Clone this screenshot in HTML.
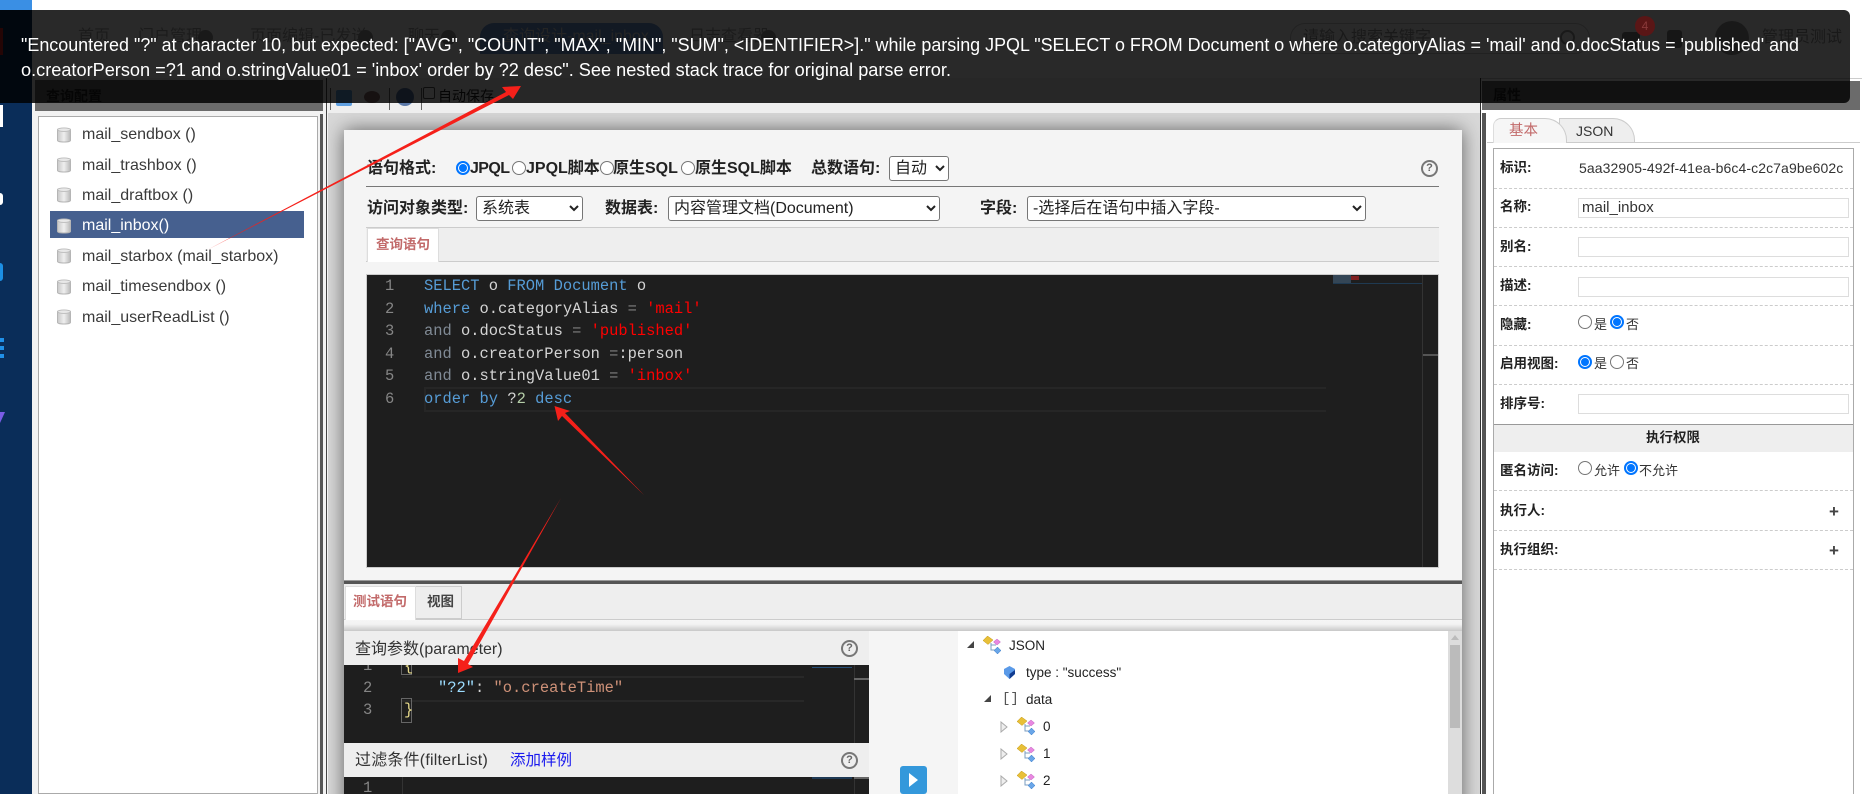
<!DOCTYPE html>
<html><head><meta charset="utf-8"><title>查询设计</title>
<style>
html,body{margin:0;padding:0;width:1862px;height:794px;overflow:hidden;background:#fff}
body{position:relative;font-family:"Liberation Sans","Noto Sans CJK SC",sans-serif;font-size:13.5px;color:#333}
.a,.t{position:absolute;box-sizing:border-box}
.t{white-space:nowrap}
.b{font-weight:bold;color:#222}
.li{position:absolute;left:82px;height:24px;line-height:24px;font-size:16px;color:#3a3a3a;white-space:nowrap}
.db{position:absolute;left:57px;width:14px;height:16px}
.code{position:absolute;left:424px;height:22px;line-height:22px;font:15.43px/22px "Liberation Mono",monospace;color:#d4d4d4;white-space:pre}
.ln{position:absolute;height:22px;font:15.43px/22px "Liberation Mono",monospace;color:#858585;white-space:pre}
.k{color:#569cd6}.g{color:#808a95}.s{color:#f00}.e{color:#808080}.n{color:#b5cea8}
.r{position:absolute;width:14px;height:14px;border-radius:50%;border:1px solid #767676;background:#fff;box-sizing:border-box}
.r.c{border:2px solid #0075ff}
.r.c:after{content:"";position:absolute;left:1px;top:1px;width:8px;height:8px;border-radius:50%;background:#0075ff}
select{position:absolute;box-sizing:border-box;background:#fff;border:1px solid #767676;border-radius:3px;font:16px "Liberation Sans","Noto Sans CJK SC",sans-serif;color:#222;padding:0 0 0 1px;margin:0}
.i{position:absolute;left:1578px;width:271px;height:20px;border:1px solid #ddd;background:#fff;box-sizing:border-box;font-size:15px;line-height:18px;padding-left:3px;color:#333}
.d{position:absolute;left:1494px;width:359px;height:0;border-top:1px dashed #ccc}
.h{position:absolute;width:17px;height:17px;border:2px solid #777;border-radius:50%;box-sizing:border-box;font:bold 11px/13px "Liberation Sans",sans-serif;color:#666;text-align:center;background:#f4f4f4}
.p{position:absolute;font:bold 17px/17px "Liberation Sans",sans-serif;color:#444}
.tr{position:absolute;font-size:13.5px;height:20px;line-height:20px;color:#222;white-space:nowrap}
.ic{position:absolute;width:20px;height:20px}
.gh{position:absolute;white-space:nowrap;top:27px;line-height:20px;font-size:16px;color:#aaa}
.gc{position:absolute;top:30px;width:15px;height:15px;border-radius:50%;background:#999}
</style></head><body>
<svg width="0" height="0" style="position:absolute">
<defs>
<linearGradient id="dg" x1="0" x2="1" y1="0" y2="0"><stop offset="0" stop-color="#c8c8c8"/><stop offset=".5" stop-color="#efefef"/><stop offset="1" stop-color="#b8b8b8"/></linearGradient>
<symbol id="db" viewBox="0 0 14 18" preserveAspectRatio="none"><path d="M.5 3C.5 1 13.500 1 13.500 3V15C13.500 17.500 .5 17.500 .5 15Z" fill="url(#dg)" stroke="#b5b5b5"/><ellipse cx="7" cy="3" rx="6.500" ry="2" fill="#e8e8e8" stroke="#bbb"/></symbol>
<symbol id="tree" viewBox="0 0 20 20"><path d="M8 7V14H13M8 9H13" fill="none" stroke="#7a9cc0"/><path d="M0 4.500 4.500 0 10 4 5 8.500Z" fill="#e8c038" stroke="#c49a20" stroke-width=".5"/><path d="M10.500 6 14 3 17.500 6 14 9Z" fill="#e888e0" stroke="#c060c0" stroke-width=".5"/><path d="M11 14.500 14.500 11 18 14.500 14.500 18Z" fill="#6aa6e8" stroke="#4080c8" stroke-width=".5"/></symbol>
</defs></svg>

<!-- left nav -->
<div class="a" style="left:0;top:0;width:32px;height:10px;background:#3a8fe4"></div>
<div class="a" style="left:0;top:10px;width:32px;height:784px;background:#0a2d59"></div>
<div class="a" style="left:0;top:28px;width:3px;height:27px;background:#e02020"></div>
<div class="a" style="left:0;top:105px;width:3px;height:22px;background:#fff"></div>
<div class="a" style="left:0;top:193px;width:3px;height:12px;background:#fff;border-radius:0 3px 3px 0"></div>
<div class="a" style="left:0;top:263px;width:3px;height:18px;background:#1c8fe4;border-radius:0 4px 4px 0"></div>
<div class="a" style="left:0;top:338px;width:4px;height:4px;background:#2090e8"></div>
<div class="a" style="left:0;top:346px;width:4px;height:4px;background:#2090e8"></div>
<div class="a" style="left:0;top:354px;width:4px;height:4px;background:#2090e8"></div>
<svg class="a" style="left:0;top:412px" width="5" height="12"><path d="M0 0H5L0 11Z" fill="#7a5ce6"/></svg>

<!-- header under toast -->
<div class="gh" style="left:78px">首页</div>
<div class="gh" style="left:138px">门户管理</div>
<div class="gc" style="left:198px"></div>
<div class="gh" style="left:250px">页面编辑-已发送</div>
<div class="gc" style="left:358px"></div>
<div class="gh" style="left:408px">聊天</div>
<div class="gc" style="left:441px"></div>
<div class="a" style="left:480px;top:23px;width:183px;height:31px;border-radius:14px 14px 0 0;background:#6f9ad8"></div>
<div class="gh" style="left:503px;color:#ddd">查询设计-mail_inbox</div>
<div class="gh" style="left:689px">日志查看器</div>
<div class="gc" style="left:761px"></div>
<div class="a" style="left:1290px;top:23px;width:300px;height:31px;border:1px solid #ccc;border-radius:15px"></div>
<div class="gh" style="left:1303px;top:28px;color:#999">请输入搜索关键字</div>
<div class="a" style="left:1560px;top:30px;width:15px;height:15px;border:2px solid #999;border-radius:50%"></div>
<div class="a" style="left:1622px;top:32px;width:18px;height:16px;background:#888;border-radius:3px"></div>
<div class="a" style="left:1667px;top:30px;width:15px;height:18px;background:#888;border-radius:3px"></div>
<div class="a" style="left:1715px;top:21px;width:34px;height:34px;border-radius:50%;background:#999"></div>
<div class="gh" style="left:1762px;top:28px;color:#999">管理员测试</div>

<!-- left panel -->
<div class="a" style="left:32px;top:78px;width:296px;height:716px;background:#f2f2f2"></div>
<div class="a" style="left:35px;top:80px;width:288px;height:31px;background:#6b6b6b"></div>
<div class="t b" style="left:46px;top:86px;line-height:20px;font-size:14px;color:#222">查询配置</div>
<div class="a" style="left:38px;top:116px;width:280px;height:678px;background:#fff;border:1px solid #aaa"></div>
<div class="a" style="left:320px;top:114px;width:3px;height:680px;background:#555"></div>
<div class="a" style="left:326px;top:78px;width:1px;height:716px;background:#444"></div>
<div class="a" style="left:50px;top:211px;width:254px;height:27px;background:#46608f"></div>
<svg class="db" style="top:127px"><use href="#db"/></svg>
<svg class="db" style="top:157px"><use href="#db"/></svg>
<svg class="db" style="top:187px"><use href="#db"/></svg>
<svg class="db" style="top:218px"><use href="#db"/></svg>
<svg class="db" style="top:248px"><use href="#db"/></svg>
<svg class="db" style="top:279px"><use href="#db"/></svg>
<svg class="db" style="top:309px"><use href="#db"/></svg>
<div class="li" style="top:123px">mail_sendbox ()</div>
<div class="li" style="top:154px">mail_trashbox ()</div>
<div class="li" style="top:184px">mail_draftbox ()</div>
<div class="li" style="top:214px;color:#fff">mail_inbox()</div>
<div class="li" style="top:245px">mail_starbox (mail_starbox)</div>
<div class="li" style="top:275px">mail_timesendbox ()</div>
<div class="li" style="top:306px">mail_userReadList ()</div>

<!-- toolbar -->
<div class="a" style="left:328px;top:78px;width:1152px;height:36px;background:#eee"></div>
<div class="a" style="left:330px;top:88px;width:1px;height:22px;background:#666"></div>
<div class="a" style="left:389px;top:88px;width:1px;height:22px;background:#666"></div>
<div class="a" style="left:421px;top:88px;width:1px;height:22px;background:#666"></div>
<div class="a" style="left:336px;top:90px;width:16px;height:16px;background:#5f9fe0;border-radius:2px"></div>
<div class="a" style="left:364px;top:91px;width:16px;height:12px;background:#8a6a6a;border-radius:50%"></div>
<div class="a" style="left:396px;top:88px;width:18px;height:18px;background:#5a78a8;border-radius:50%"></div>
<div class="a" style="left:423px;top:87px;width:12px;height:12px;border:1px solid #555;border-radius:2px;background:#fff"></div>
<div class="t" style="left:438px;top:86px;line-height:20px;font-size:14px;color:#222">自动保存</div>

<!-- center clip + card -->
<div class="a" style="left:328px;top:113px;width:1152px;height:681px;overflow:hidden;background:#d8d8d8">
  <div class="a" style="left:16px;top:17px;width:1118px;height:700px;background:#f4f4f4;box-shadow:0 0 18px rgba(0,0,0,.55)"></div>
</div>
<div class="a" style="left:1480px;top:78px;width:1px;height:716px;background:#333"></div>

<div class="t b" style="left:367px;top:158px;line-height:22px;font-size:16px">语句格式:</div>
<div class="r c" style="left:456px;top:161px"></div>
<div class="t" style="left:470px;top:158px;line-height:22px;font-size:16px;letter-spacing:-.6px;font-weight:bold;color:#222">JPQL</div>
<div class="r" style="left:512px;top:161px"></div>
<div class="t" style="left:526px;top:158px;line-height:22px;font-size:16px;font-weight:bold;color:#222">JPQL脚本</div>
<div class="r" style="left:600px;top:161px"></div>
<div class="t" style="left:613px;top:158px;line-height:22px;font-size:16px;font-weight:bold;color:#222">原生SQL</div>
<div class="r" style="left:681px;top:161px"></div>
<div class="t" style="left:695px;top:158px;line-height:22px;font-size:16px;font-weight:bold;color:#222">原生SQL脚本</div>
<div class="t b" style="left:811px;top:158px;line-height:22px;font-size:16px">总数语句:</div>
<select style="left:889px;top:156px;width:60px;height:25px"><option>自动</option></select>
<div class="h" style="left:1421px;top:160px">?</div>
<div class="a" style="left:366px;top:186px;width:1073px;height:1px;background:#777"></div>

<div class="t b" style="left:367px;top:198px;line-height:22px;font-size:16px">访问对象类型:</div>
<select style="left:476px;top:196px;width:107px;height:25px"><option>系统表</option></select>
<div class="t b" style="left:605px;top:198px;line-height:22px;font-size:16px">数据表:</div>
<select style="left:668px;top:196px;width:272px;height:25px"><option>内容管理文档(Document)</option></select>
<div class="t b" style="left:980px;top:198px;line-height:22px;font-size:16px">字段:</div>
<select style="left:1027px;top:196px;width:339px;height:25px"><option>-选择后在语句中插入字段-</option></select>
<div class="a" style="left:366px;top:227px;width:1073px;height:35px;background:#eee;border-top:1px solid #ccc;border-bottom:1px solid #ccc"></div>
<div class="a" style="left:367px;top:228px;width:72px;height:34px;background:#fff;border:1px solid #ddd;border-bottom:0"></div>
<div class="t" style="left:376px;top:235px;line-height:20px;font-size:13.500px;font-weight:bold;color:#c26a6a">查询语句</div>

<!-- main editor -->
<div class="a" style="left:366px;top:274px;width:1073px;height:294px;background:#1e1e1e;border:1px solid #ccc"></div>
<div class="a" style="left:424px;top:387px;width:902px;height:25px;border:2px solid #262626;border-right:0"></div>
<div class="a" style="left:1422px;top:275px;width:1px;height:292px;background:#333"></div>
<div class="a" style="left:1333px;top:283px;width:89px;height:1px;background:#1f3a52"></div>
<div class="a" style="left:1333px;top:275px;width:18px;height:8px;background:#344656"></div>
<div class="a" style="left:1351px;top:276px;width:8px;height:4px;background:#802020"></div>
<div class="a" style="left:1423px;top:354px;width:15px;height:2px;background:#555"></div>
<div class="ln" style="left:385px;top:275px">1</div><div class="ln" style="left:385px;top:298px">2</div><div class="ln" style="left:385px;top:320px">3</div><div class="ln" style="left:385px;top:343px">4</div><div class="ln" style="left:385px;top:365px">5</div><div class="ln" style="left:385px;top:388px">6</div>
<div class="code" style="top:275px"><span class="k">SELECT</span> o <span class="k">FROM</span> <span class="k">Document</span> o</div>
<div class="code" style="top:298px"><span class="k">where</span> o.categoryAlias <span class="e">=</span> <span class="s">'mail'</span></div>
<div class="code" style="top:320px"><span class="g">and</span> o.docStatus <span class="e">=</span> <span class="s">'published'</span></div>
<div class="code" style="top:343px"><span class="g">and</span> o.creatorPerson <span class="e">=</span>:person</div>
<div class="code" style="top:365px"><span class="g">and</span> o.stringValue01 <span class="e">=</span> <span class="s">'inbox'</span></div>
<div class="code" style="top:388px"><span class="k">order</span> <span class="k">by</span> ?<span class="n">2</span> <span class="k">desc</span></div>

<!-- divider & lower tabs -->
<div class="a" style="left:344px;top:580px;width:1118px;height:4px;background:#555;border-top:1px solid #999"></div>
<div class="a" style="left:344px;top:584px;width:1118px;height:36px;background:#eee;border-bottom:1px solid #ccc"></div>
<div class="a" style="left:345px;top:586px;width:71px;height:34px;background:#fff;border:1px solid #ddd;border-bottom:0"></div>
<div class="a" style="left:416px;top:586px;width:46px;height:33px;background:#eee;border:1px solid #ccc;border-left:0"></div>
<div class="t" style="left:353px;top:592px;line-height:20px;font-size:13.500px;font-weight:bold;color:#c26a6a">测试语句</div>
<div class="t" style="left:427px;top:592px;line-height:20px;font-size:13.500px;font-weight:bold;color:#444">视图</div>
<div class="a" style="left:344px;top:620px;width:1118px;height:11px;background:linear-gradient(#f6f6f6,#f2f2f2 40%,#c8c8c8)"></div>

<!-- params panel -->
<div class="a" style="left:344px;top:631px;width:525px;height:34px;background:#eee"></div>
<div class="t" style="left:355px;top:640px;line-height:20px;font-size:16px;color:#333">查询参数(parameter)</div>
<div class="h" style="left:841px;top:640px;background:#eee">?</div>
<div class="a" style="left:344px;top:665px;width:525px;height:78px;background:#1e1e1e"></div>
<div class="a" style="left:402px;top:676px;width:402px;height:26px;border-top:2px solid #282828;border-bottom:2px solid #282828"></div>
<div class="a" style="left:401px;top:665px;width:11px;height:10px;border:1px solid #666;border-top:0"></div>
<div class="a" style="left:401px;top:698px;width:11px;height:25px;border:1px solid #666"></div>
<div class="a" style="left:854px;top:665px;width:1px;height:78px;background:#333"></div>
<div class="a" style="left:854px;top:678px;width:15px;height:2px;background:#666"></div>
<div class="a" style="left:812px;top:667px;width:40px;height:1px;background:#264f78"></div>
<div style="position:absolute;left:344px;top:665px;width:525px;height:78px;overflow:hidden">
<div class="ln" style="left:19px;top:-10px">1</div><div class="ln" style="left:19px;top:12px">2</div><div class="ln" style="left:19px;top:34px">3</div>
<div class="code" style="left:60px;top:-10px;color:#e6d98a">{</div>
<div class="code" style="left:94px;top:12px"><span style="color:#9cdcfe">"?2"</span>: <span style="color:#ce9178">"o.createTime"</span></div>
<div class="code" style="left:60px;top:34px;color:#e6d98a">}</div>
</div>

<!-- filter panel -->
<div class="a" style="left:344px;top:743px;width:525px;height:34px;background:#eee"></div>
<div class="t" style="left:355px;top:751px;line-height:20px;font-size:16px;letter-spacing:.2px;color:#333">过滤条件(filterList)</div>
<div class="t" style="left:510px;top:751px;line-height:20px;font-size:15.500px;color:#1a1aee">添加样例</div>
<div class="h" style="left:841px;top:752px;background:#eee">?</div>
<div class="a" style="left:344px;top:777px;width:525px;height:17px;background:#1e1e1e"></div>
<div class="a" style="left:402px;top:777px;width:1px;height:17px;background:#333"></div>
<div class="a" style="left:854px;top:777px;width:1px;height:17px;background:#333"></div>
<div class="a" style="left:854px;top:777px;width:15px;height:2px;background:#666"></div>
<div class="a" style="left:812px;top:777px;width:40px;height:2px;background:#1f3a55"></div>
<div class="ln" style="left:363px;top:777px">1</div>

<!-- run btn -->
<div class="a" style="left:869px;top:631px;width:89px;height:163px;background:#f5f5f5"></div>
<div class="a" style="left:900px;top:766px;width:27px;height:28px;background:#3498db;border-radius:3px"></div>
<svg class="a" style="left:908px;top:772px" width="12" height="16"><path d="M1 1 10 8 1 15Z" fill="#fff"/></svg>

<!-- tree -->
<div class="a" style="left:958px;top:631px;width:490px;height:163px;background:#fff"></div>
<div class="a" style="left:1448px;top:631px;width:14px;height:163px;background:#ddd"></div>
<div class="a" style="left:1450px;top:645px;width:10px;height:83px;background:#bbb"></div>
<svg class="a" style="left:1450px;top:635px" width="10" height="6"><path d="M5 0 9 5H1Z" fill="#bbb"/></svg>
<svg class="a" style="left:966px;top:640px" width="10" height="10"><path d="M8 1V8H1Z" fill="#444"/></svg>
<svg class="ic" style="left:983px;top:636px"><use href="#tree"/></svg>
<div class="tr" style="left:1009px;top:636px">JSON</div>
<svg class="a" style="left:1003px;top:666px" width="13" height="14"><path d="M6.500 0 12 3V8L6.500 13 1 8V3Z" fill="#5a9ae8"/><path d="M12 4V8L6.500 13V8Z" fill="#123c90"/></svg>
<div class="tr" style="left:1026px;top:663px">type : "success"</div>
<svg class="a" style="left:983px;top:694px" width="10" height="10"><path d="M8 1V8H1Z" fill="#444"/></svg>
<div class="tr" style="left:1002px;top:689px;font:14px/20px 'Liberation Mono',monospace;color:#555">[]</div>
<div class="tr" style="left:1026px;top:690px">data</div>
<svg class="a" style="left:1000px;top:721px" width="9" height="12"><path d="M1 1 7 6 1 11Z" fill="#eee" stroke="#aaa"/></svg>
<svg class="ic" style="left:1017px;top:717px"><use href="#tree"/></svg>
<div class="tr" style="left:1043px;top:717px">0</div>
<svg class="a" style="left:1000px;top:748px" width="9" height="12"><path d="M1 1 7 6 1 11Z" fill="#eee" stroke="#aaa"/></svg>
<svg class="ic" style="left:1017px;top:744px"><use href="#tree"/></svg>
<div class="tr" style="left:1043px;top:744px">1</div>
<svg class="a" style="left:1000px;top:775px" width="9" height="12"><path d="M1 1 7 6 1 11Z" fill="#eee" stroke="#aaa"/></svg>
<svg class="ic" style="left:1017px;top:771px"><use href="#tree"/></svg>
<div class="tr" style="left:1043px;top:771px">2</div>

<!-- right panel -->
<div class="a" style="left:1481px;top:78px;width:381px;height:716px;background:#fff"></div>
<div class="a" style="left:1481px;top:78px;width:381px;height:1px;background:#ccc"></div>
<div class="a" style="left:1482px;top:81px;width:378px;height:29px;background:#6b6b6b"></div>
<div class="t b" style="left:1493px;top:85px;line-height:20px;font-size:14px;color:#222">属性</div>
<div class="a" style="left:1482px;top:113px;width:4px;height:681px;background:#555"></div>
<div class="a" style="left:1559px;top:118px;width:76px;height:24px;background:#eee;border:1px solid #ccc;border-bottom:0;border-radius:0 22px 0 0"></div>
<div class="a" style="left:1487px;top:142px;width:373px;height:1px;background:#ccc"></div>
<div class="a" style="left:1493px;top:118px;width:74px;height:25px;background:#f6f6f6;border-top:1px solid #ccc;border-left:1px solid #ddd;border-right:1px solid #ccc;border-radius:8px 22px 0 0"></div>
<div class="t" style="left:1509px;top:121px;line-height:20px;font-size:14.5px;color:#c26a6a">基本</div>
<div class="t" style="left:1576px;top:121px;line-height:20px;font-size:14px;color:#333">JSON</div>
<div class="a" style="left:1493px;top:148px;width:361px;height:646px;border:1px solid #aaa;border-bottom:0"></div>

<div class="t b" style="left:1500px;top:158px;line-height:20px">标识:</div>
<div class="t" style="left:1579px;top:158px;line-height:20px;font-size:14px;letter-spacing:.1px;color:#333">5aa32905-492f-41ea-b6c4-c2c7a9be602c</div>
<div class="d" style="top:188px"></div>
<div class="t b" style="left:1500px;top:197px;line-height:20px">名称:</div>
<div class="i" style="top:198px">mail_inbox</div>
<div class="d" style="top:227px"></div>
<div class="t b" style="left:1500px;top:237px;line-height:20px">别名:</div>
<div class="i" style="top:237px"></div>
<div class="d" style="top:266px"></div>
<div class="t b" style="left:1500px;top:276px;line-height:20px">描述:</div>
<div class="i" style="top:277px"></div>
<div class="d" style="top:305px"></div>
<div class="t b" style="left:1500px;top:315px;line-height:20px">隐藏:</div>
<div class="r" style="left:1578px;top:315px"></div><div class="t" style="left:1594px;top:315px;line-height:20px;font-size:13px">是</div>
<div class="r c" style="left:1610px;top:315px"></div><div class="t" style="left:1626px;top:315px;line-height:20px;font-size:13px">否</div>
<div class="d" style="top:345px"></div>
<div class="t b" style="left:1500px;top:354px;line-height:20px">启用视图:</div>
<div class="r c" style="left:1578px;top:355px"></div><div class="t" style="left:1594px;top:354px;line-height:20px;font-size:13px">是</div>
<div class="r" style="left:1610px;top:355px"></div><div class="t" style="left:1626px;top:354px;line-height:20px;font-size:13px">否</div>
<div class="d" style="top:384px"></div>
<div class="t b" style="left:1500px;top:394px;line-height:20px">排序号:</div>
<div class="i" style="top:394px"></div>
<div class="a" style="left:1494px;top:424px;width:359px;height:28px;background:#eee;border-top:1px solid #999"></div>
<div class="t b" style="left:1646px;top:428px;line-height:20px">执行权限</div>
<div class="t b" style="left:1500px;top:461px;line-height:20px">匿名访问:</div>
<div class="r" style="left:1578px;top:461px"></div><div class="t" style="left:1594px;top:461px;line-height:20px;font-size:13px">允许</div>
<div class="r c" style="left:1624px;top:461px"></div><div class="t" style="left:1639px;top:461px;line-height:20px;font-size:13px">不允许</div>
<div class="d" style="top:490px"></div>
<div class="t b" style="left:1500px;top:501px;line-height:20px">执行人:</div>
<div class="p" style="left:1829px;top:503px">+</div>
<div class="d" style="top:530px"></div>
<div class="t b" style="left:1500px;top:540px;line-height:20px">执行组织:</div>
<div class="p" style="left:1829px;top:542px">+</div>
<div class="d" style="top:569px"></div>

<!-- toast -->
<div class="a" style="left:-10px;top:10px;width:1860px;height:93px;background:rgba(0,0,0,.84);border-radius:6px"></div>
<div class="a" style="left:1635px;top:16px;width:20px;height:20px;border-radius:50%;background:#5a1616;color:#8a3a3a;text-align:center;line-height:20px;font-size:12px">4</div>
<svg class="a" style="left:0;top:0" width="1862" height="110" font-family="Liberation Sans, sans-serif" font-size="18" fill="#fff">
<text x="21" y="51" textLength="1778" lengthAdjust="spacingAndGlyphs">"Encountered "?" at character 10, but expected: ["AVG", "COUNT", "MAX", "MIN", "SUM", &lt;IDENTIFIER&gt;]." while parsing JPQL "SELECT o FROM Document o where o.categoryAlias = 'mail' and o.docStatus = 'published' and</text>
<text x="21" y="76" textLength="930" lengthAdjust="spacingAndGlyphs">o.creatorPerson =?1 and o.stringValue01 = 'inbox' order by ?2 desc". See nested stack trace for original parse error.</text>
</svg>

<!-- arrows -->
<svg class="a" style="left:0;top:0;pointer-events:none" width="1862" height="794">
<path d="M207 250 506 92 502 87 521 86 513 99 509 95Z" fill="#f5201a"/>
<path d="M644 495 562 416 558 421 554.500 406 570 411 565 413Z" fill="#f5201a"/>
<path d="M561 498 464 661 458 658 458 673 473 667 468 664Z" fill="#f5201a"/>
</svg>
</body></html>
